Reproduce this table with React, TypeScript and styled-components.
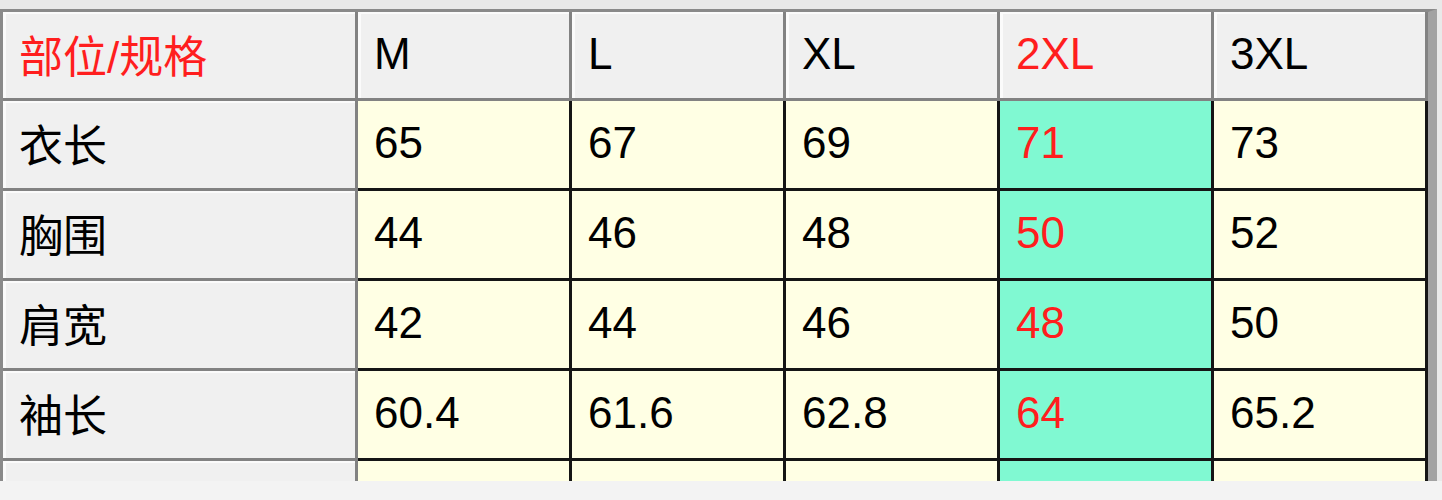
import React, { FC } from 'react';
import styled, { createGlobalStyle, css } from 'styled-components';

const GlobalStyle = createGlobalStyle`
    html, body {
        margin: 0;
        padding: 0;
        background: #f3f3f3;
    }
`;

const Viewport = styled.div`
    height: 481px;
    overflow: hidden;
    background: #e9e9e9;
    padding-top: 9px;
    box-sizing: border-box;
`;

const Frame = styled.div`
    width: 1437px;
    box-sizing: border-box;
    border-top: 3px solid #8a8a8a;
    border-left: 3px solid #8a8a8a;
    border-right: 9px solid #a2a2a2;
    display: grid;
    grid-template-columns: 355px repeat(5, 214px);
    grid-auto-rows: 90px;
    grid-template-rows: 89px;
    font-family: 'Liberation Sans', 'Noto Sans CJK SC', sans-serif;
    font-size: 44px;
`;

type Kind = 'head' | 'data' | 'pick';

const Cell = styled.div<{ $kind: Kind; $red?: boolean }>`
    box-sizing: border-box;
    display: flex;
    align-items: center;
    padding: 0 0 3px 16px;
    border-right: 3px solid;
    border-bottom: 3px solid;
    color: ${(p) => (p.$red ? '#ff1e1e' : '#000')};
    white-space: nowrap;

    ${(p) =>
        p.$kind === 'head' &&
        css`
            background: #f0f0f0;
            border-color: #828282;
            box-shadow: inset 3px 2px 0 #fbfbfb;
        `}
    ${(p) =>
        p.$kind === 'data' &&
        css`
            background: #ffffe4;
            border-color: #151515;
        `}
    ${(p) =>
        p.$kind === 'pick' &&
        css`
            background: #80f9d2;
            border-color: #151515;
        `}
`;

const sizes = ['M', 'L', 'XL', '2XL', '3XL'];
const picked = 3;

const rows: [string, string[]][] = [
    ['衣长', ['65', '67', '69', '71', '73']],
    ['胸围', ['44', '46', '48', '50', '52']],
    ['肩宽', ['42', '44', '46', '48', '50']],
    ['袖长', ['60.4', '61.6', '62.8', '64', '65.2']],
    ['', ['', '', '', '', '']],
];

const App: FC = () => (
    <>
        <GlobalStyle />
        <Viewport>
            <Frame>
                <Cell $kind="head" $red>
                    部位/规格
                </Cell>
                {sizes.map((s, i) => (
                    <Cell key={s} $kind="head" $red={i === picked}>
                        {s}
                    </Cell>
                ))}
                {rows.map(([name, values], r) => (
                    <React.Fragment key={r}>
                        <Cell $kind="head">{name}</Cell>
                        {values.map((v, i) => (
                            <Cell
                                key={i}
                                $kind={i === picked ? 'pick' : 'data'}
                                $red={i === picked}
                            >
                                {v}
                            </Cell>
                        ))}
                    </React.Fragment>
                ))}
            </Frame>
        </Viewport>
    </>
);

export default App;
